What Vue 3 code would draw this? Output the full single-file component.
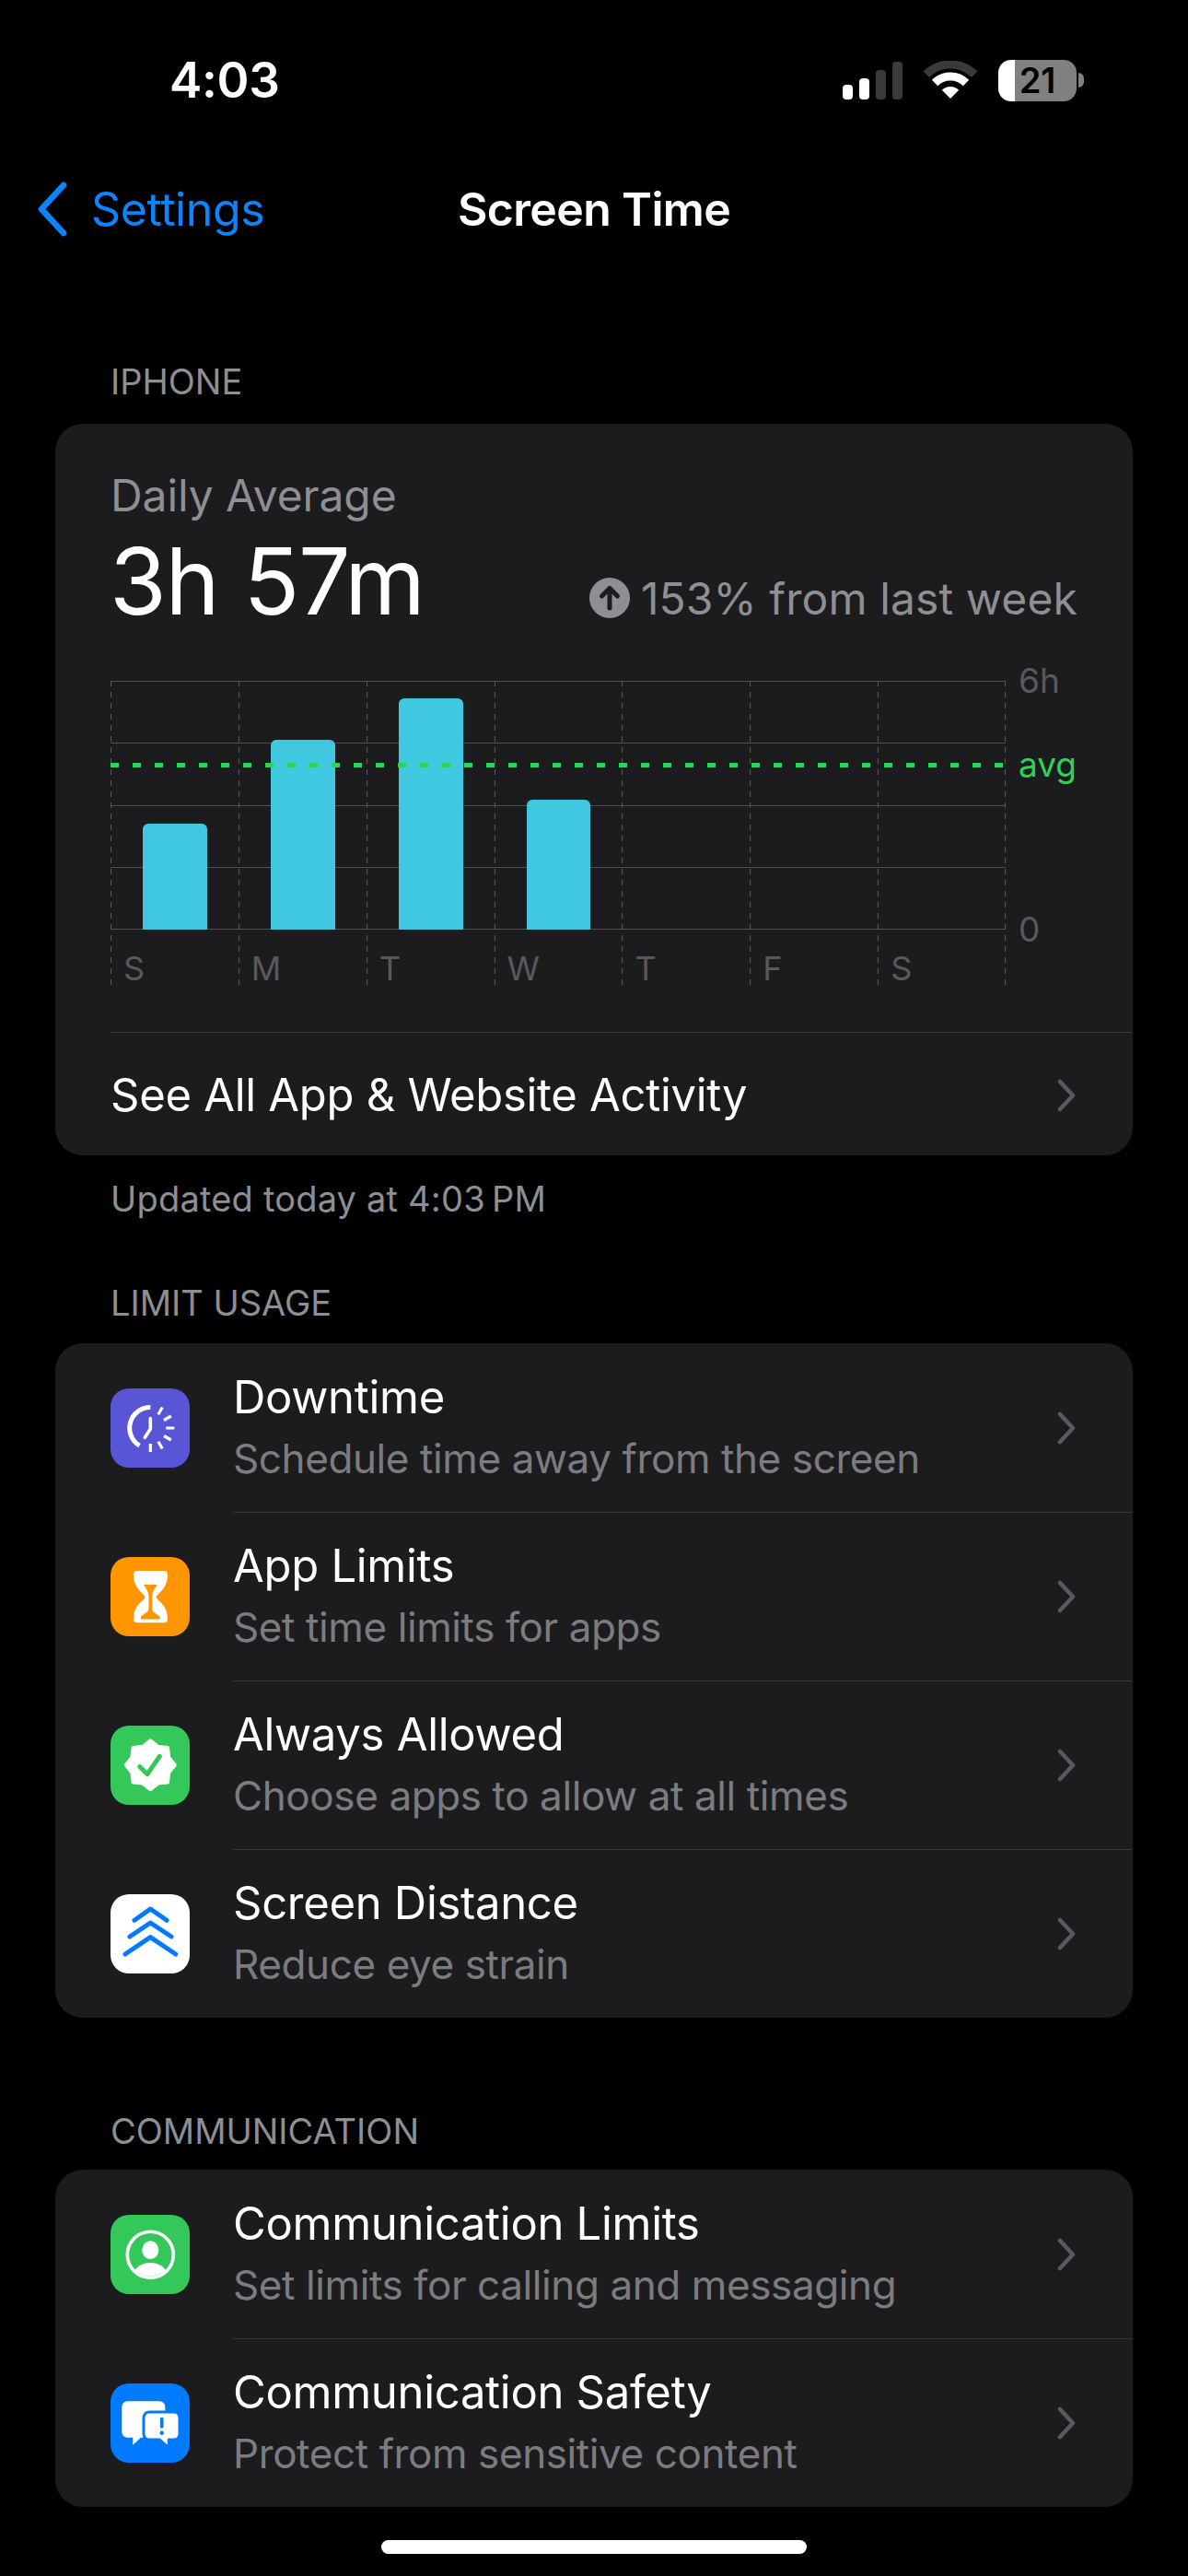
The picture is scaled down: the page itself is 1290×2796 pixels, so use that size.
<script setup>
const days = [
  { label: 'S', hours: 2.56 },
  { label: 'M', hours: 4.58 },
  { label: 'T', hours: 5.58 },
  { label: 'W', hours: 3.13 },
  { label: 'T', hours: 0 },
  { label: 'F', hours: 0 },
  { label: 'S', hours: 0 },
]

const limitRows = [
  { icon: 'downtime', title: 'Downtime', sub: 'Schedule time away from the screen' },
  { icon: 'limits', title: 'App Limits', sub: 'Set time limits for apps' },
  { icon: 'allowed', title: 'Always Allowed', sub: 'Choose apps to allow at all times' },
  { icon: 'distance', title: 'Screen Distance', sub: 'Reduce eye strain' },
]

const commRows = [
  { icon: 'person', title: 'Communication Limits', sub: 'Set limits for calling and messaging' },
  { icon: 'safety', title: 'Communication Safety', sub: 'Protect from sensitive content' },
]

const sections = [
  { label: 'LIMIT USAGE', rows: limitRows },
  { label: 'COMMUNICATION', rows: commRows },
]

// eight-lobed badge behind the check mark
const badgePoints = Array.from({ length: 16 }, (_, i) => {
  const r = i % 2 ? 21.5 : 26.5
  const a = (i * Math.PI) / 8 - Math.PI / 2
  return `${(43.3 + r * Math.cos(a)).toFixed(1)},${(42.7 + r * Math.sin(a)).toFixed(1)}`
}).join(' ')
</script>

<template>
  <main class="page">
    <header class="status">
      <span class="clock">4:03</span>
      <div class="status-icons">
        <div class="signal">
          <i class="on h1"></i><i class="on h2"></i><i class="h3"></i><i class="h4"></i>
        </div>
        <svg class="wifi" width="58" height="42" viewBox="0 0 58 42">
          <path d="M2.8 14.8A37 37 0 0 1 55.2 14.8" fill="none" stroke="#3a3a3c" stroke-width="9" />
          <path d="M12 24A24 24 0 0 1 46 24" fill="none" stroke="#fff" stroke-width="9" />
          <path d="M29 41L19.8 31.8A13 13 0 0 1 38.2 31.8Z" fill="#fff" />
        </svg>
        <div class="battery">
          <div class="battery-body"><span>21</span></div>
          <i class="battery-cap"></i>
        </div>
      </div>
    </header>

    <nav class="nav">
      <div class="back">
        <svg width="36" height="60" viewBox="0 0 36 60">
          <path d="M31 4L7 30L31 56" fill="none" stroke="#0a84ff" stroke-width="6.5" stroke-linecap="round" stroke-linejoin="round" />
        </svg>
        <span>Settings</span>
      </div>
      <h1>Screen Time</h1>
    </nav>

    <h2 class="section-label first">IPHONE</h2>
    <section class="card">
      <div class="summary">
        <p class="daily">Daily Average</p>
        <div class="hero">
          <span class="total">3h 57m</span>
          <span class="delta">
            <svg width="44" height="44" viewBox="0 0 44 44">
              <circle cx="22" cy="22" r="22" fill="#8e8e93" />
              <path d="M22 33V12M13.5 20L22 11.5L30.5 20" fill="none" stroke="#1c1c1e" stroke-width="5" stroke-linecap="round" stroke-linejoin="round" />
            </svg>
            153% from last week
          </span>
        </div>
      </div>

      <div class="chart">
        <div class="grid-lines"><i></i><i></i><i></i><i></i><i></i></div>
        <div class="columns">
          <div v-for="(d, i) in days" :key="i" class="column">
            <div class="plot">
              <div v-if="d.hours" class="bar" :style="{ height: (d.hours / 6) * 100 + '%' }"></div>
            </div>
            <span class="day">{{ d.label }}</span>
          </div>
        </div>
        <div class="avg-line"></div>
        <span class="axis six">6h</span>
        <span class="axis avg">avg</span>
        <span class="axis zero">0</span>
      </div>

      <div class="activity">
        <span>See All App &amp; Website Activity</span>
        <svg class="chevron" width="20" height="36" viewBox="0 0 20 36">
          <path d="M3 3L17 18L3 33" fill="none" stroke="#5a5a5e" stroke-width="4.5" stroke-linecap="round" stroke-linejoin="round" />
        </svg>
      </div>
    </section>
    <p class="updated">Updated today at 4:03&#8239;PM</p>

    <template v-for="s in sections" :key="s.label">
      <h2 class="section-label" :class="{ limit: s.rows === limitRows, comm: s.rows === commRows }">{{ s.label }}</h2>
      <section class="card">
        <div v-for="r in s.rows" :key="r.title" class="row">
          <div class="icon" :class="r.icon">
            <svg v-if="r.icon === 'downtime'" width="86" height="86" viewBox="0 0 86 86">
              <path d="M43.3 20.5A22.5 22.5 0 0 0 31.5 62.2" fill="none" stroke="#fff" stroke-width="5" />
              <path d="M43.3 32.5V44L37.3 53.3" fill="none" stroke="#fff" stroke-width="3.6" stroke-linecap="round" stroke-linejoin="round" />
              <path d="M51.8 28.3L56.3 20.5M58 34.5L65.8 30M60.3 43H69.3M58 51.5L65.8 56M51.8 57.7L56.3 65.5M43.3 60V69" fill="none" stroke="#fff" stroke-width="3.2" />
            </svg>
            <svg v-else-if="r.icon === 'limits'" width="86" height="86" viewBox="0 0 86 86">
              <path d="M29 15H58a4 4 0 0 1 4 4c0 10-4 15-8 19c-3 3-4 4-4 5.3s1 3 4 5.5c4 4 8 9 8 18.5a4 4 0 0 1-4 4H29a4 4 0 0 1-4-4c0-9.5 4-14.5 8-18.5c3-2.5 4-4 4-5.500s-1-2.500-4-5.300c-4-4-8-9-8-19a4 4 0 0 1 4-4z" fill="#fff" />
              <path d="M36 30H50.7L47 36Q45.2 39 45.2 44V55Q45.2 59 48 60.5L53.5 64.5V67.5H33V64.5L38.5 60.5Q41.5 59 41.5 55V44Q41.5 39 39.7 36Z" fill="#ff9500" />
            </svg>
            <svg v-else-if="r.icon === 'allowed'" width="86" height="86" viewBox="0 0 86 86">
              <polygon :points="badgePoints" fill="#fff" stroke="#fff" stroke-width="4" stroke-linejoin="round" />
              <path d="M31.7 44.4L40 52.7L53.3 33.4" fill="none" stroke="#34c759" stroke-width="5" stroke-linecap="round" stroke-linejoin="round" />
            </svg>
            <svg v-else-if="r.icon === 'distance'" width="86" height="86" viewBox="0 0 86 86">
              <path d="M26 28.3L43.3 16L61 28.3M21 46L43.3 31L66 46M16 65L43.3 46.6L70.7 65" fill="none" stroke="#007aff" stroke-width="5" stroke-linecap="round" stroke-linejoin="round" />
            </svg>
            <svg v-else-if="r.icon === 'person'" width="86" height="86" viewBox="0 0 86 86">
              <circle cx="43.3" cy="43.3" r="25" fill="none" stroke="#fff" stroke-width="3.6" />
              <ellipse cx="43.3" cy="38.3" rx="9" ry="10" fill="#fff" />
              <path d="M26.5 60C30 55 36 52 43.3 52S56.6 55 60 60A25 25 0 0 1 26.5 60Z" fill="#fff" />
            </svg>
            <svg v-else width="86" height="86" viewBox="0 0 86 86">
              <path d="M18.3 19.3H53.3a6 6 0 0 1 6 6V52.7a6 6 0 0 1-6 6H33L24.3 66.7V58.7H18.3a6 6 0 0 1-6-6V25.3a6 6 0 0 1 6-6Z" fill="#fff" />
              <path d="M42 31H69a6 6 0 0 1 6 6V55a6 6 0 0 1-6 6H63.3V70L53 61H42a6 6 0 0 1-6-6V37a6 6 0 0 1 6-6Z" fill="#fff" stroke="#007aff" stroke-width="3" stroke-linejoin="round" />
              <path d="M55.7 38.5V47" stroke="#007aff" stroke-width="3.6" stroke-linecap="round" fill="none" />
              <circle cx="55.7" cy="53.7" r="2.2" fill="#007aff" />
            </svg>
          </div>
          <div class="row-main">
            <div class="row-text">
              <span class="row-title">{{ r.title }}</span>
              <span class="row-sub">{{ r.sub }}</span>
            </div>
            <svg class="chevron" width="20" height="36" viewBox="0 0 20 36">
              <path d="M3 3L17 18L3 33" fill="none" stroke="#5a5a5e" stroke-width="4.5" stroke-linecap="round" stroke-linejoin="round" />
            </svg>
          </div>
        </div>
      </section>
    </template>

    <div class="home-bar"></div>
  </main>
</template>

<style>
html,
body {
  margin: 0;
  background: #000;
}
</style>

<style scoped>
.page {
  position: relative;
  width: 1290px;
  height: 2796px;
  overflow: hidden;
  background: #000;
  color: #fff;
  font-family: Inter, "Noto Sans", sans-serif;
}

.status {
  height: 174px;
  display: flex;
  align-items: center;
  justify-content: space-between;
  padding: 0 113px 0 184px;
}

.clock {
  font-size: 53px;
  font-weight: 600;
  letter-spacing: -0.3px;
}

.status-icons {
  display: flex;
  align-items: center;
  gap: 23px;
}

.signal {
  display: flex;
  align-items: flex-end;
  gap: 7px;
  height: 41px;
}

.signal i {
  width: 11px;
  border-radius: 4px;
  background: #3a3a3c;
}

.signal .on {
  background: #fff;
}

.h1 { height: 16px; }
.h2 { height: 23px; }
.h3 { height: 32px; }
.h4 { height: 41px; }

.battery {
  display: flex;
  align-items: center;
  gap: 2px;
}

.battery-body {
  width: 85px;
  height: 45px;
  border-radius: 14px;
  background: linear-gradient(90deg, #fff 21%, #808080 21%);
  display: flex;
  align-items: center;
  justify-content: center;
  color: #000;
  font-size: 38px;
  font-weight: 600;
}

.battery-cap {
  width: 6px;
  height: 16px;
  border-radius: 0 6px 6px 0;
  background: #808080;
}

.nav {
  position: relative;
  height: 106px;
  display: flex;
  align-items: center;
  justify-content: center;
}

.back {
  position: absolute;
  left: 38px;
  top: 0;
  height: 100%;
  display: flex;
  align-items: center;
  gap: 25px;
  color: #0a84ff;
  font-size: 50px;
  letter-spacing: -0.4px;
}

.nav h1 {
  margin: 0;
  font-size: 50px;
  font-weight: 600;
  letter-spacing: -0.65px;
}

.section-label {
  margin: 0;
  padding-left: 120px;
  height: 48px;
  line-height: 48px;
  font-size: 38px;
  font-weight: 400;
  color: #8e8e93;
  letter-spacing: 0;
}

.section-label.first {
  margin: 110px 0 22px;
}

.section-label.limit {
  margin: 66px 0 20px;
}

.section-label.comm {
  margin: 99px 0 18px;
}

.card {
  margin: 0 60px;
  background: #1c1c1e;
  border-radius: 30px;
  overflow: hidden;
}

.summary {
  padding: 50px 60px 0;
}

.daily {
  margin: 0;
  height: 56px;
  line-height: 56px;
  font-size: 48px;
  color: #8e8e93;
  letter-spacing: -0.1px;
}

.hero {
  margin-top: 4px;
  height: 120px;
  display: flex;
  align-items: center;
  justify-content: space-between;
}

.total {
  margin-left: -1px;
  font-size: 100px;
  letter-spacing: -1.2px;
}

.delta {
  display: flex;
  align-items: center;
  gap: 12px;
  margin-top: 38px;
  font-size: 48px;
  color: #8e8e93;
  letter-spacing: 0.1px;
}

.chart {
  position: relative;
  margin: 49px 0 0 60px;
  width: 972px;
  height: 330px;
}

.grid-lines {
  position: absolute;
  left: 0;
  top: 0;
  width: 100%;
  height: 270px;
  display: flex;
  flex-direction: column;
  justify-content: space-between;
}

.grid-lines i {
  display: block;
  height: 1px;
  background: #505053;
}

.columns {
  position: relative;
  height: 100%;
  display: grid;
  grid-template-columns: repeat(7, 1fr);
  background: repeating-linear-gradient(180deg, #58585a 0 6px, transparent 6px 12px) right / 1px 100% no-repeat;
}

.column {
  display: flex;
  flex-direction: column;
  background: repeating-linear-gradient(180deg, #58585a 0 6px, transparent 6px 12px) left / 1px 100% no-repeat;
}

.plot {
  height: 270px;
  padding: 0 34px 0 35px;
  display: flex;
  align-items: flex-end;
}

.bar {
  flex: 1;
  border-radius: 6px 6px 0 0;
  background: #40c8e0;
}

.day {
  margin: 22px 0 0 14px;
  font-size: 36px;
  line-height: 40px;
  color: #59595d;
}

.avg-line {
  position: absolute;
  left: 0;
  top: 89px;
  width: 100%;
  height: 5px;
  background: repeating-linear-gradient(90deg, #30d158 0 9px, transparent 9px 24px);
}

.axis {
  position: absolute;
  left: 986px;
  font-size: 37px;
  line-height: 40px;
  color: #59595d;
}

.six { top: -20px; }
.avg { top: 71px; color: #30d158; }
.zero { top: 250px; }

.activity {
  height: 134px;
  margin: 51px 0 0 60px;
  padding: 2px 62px 0 0;
  border-top: 1px solid #38383a;
  box-sizing: border-box;
  display: flex;
  align-items: center;
  justify-content: space-between;
  font-size: 49px;
  letter-spacing: -0.3px;
}

.updated {
  margin: 24px 0 0 120px;
  height: 46px;
  line-height: 46px;
  font-size: 38px;
  color: #8e8e93;
  letter-spacing: 0.2px;
}

.row {
  height: 183px;
  display: flex;
  align-items: center;
  padding-left: 60px;
}

.icon {
  flex: none;
  width: 86px;
  height: 86px;
  border-radius: 20px;
}

.downtime { background: #5856d6; }
.limits { background: #ff9500; }
.allowed { background: #34c759; }
.distance { background: #fff; }
.person { background: #34c759; }
.safety { background: #007aff; }

.row-main {
  flex: 1;
  height: 100%;
  margin-left: 47px;
  padding-right: 62px;
  box-sizing: border-box;
  display: flex;
  align-items: center;
  justify-content: space-between;
}

.row + .row .row-main {
  border-top: 1px solid #38383a;
}

.row-text {
  display: flex;
  flex-direction: column;
  gap: 10px;
  margin-top: -2px;
}

.row-title {
  font-size: 49px;
  line-height: 58px;
  letter-spacing: -0.3px;
}

.row-sub {
  font-size: 44px;
  line-height: 54px;
  color: #7c7c80;
  letter-spacing: -0.4px;
}

.home-bar {
  position: absolute;
  left: 414px;
  top: 2757px;
  width: 462px;
  height: 15px;
  border-radius: 8px;
  background: #fff;
}
</style>
